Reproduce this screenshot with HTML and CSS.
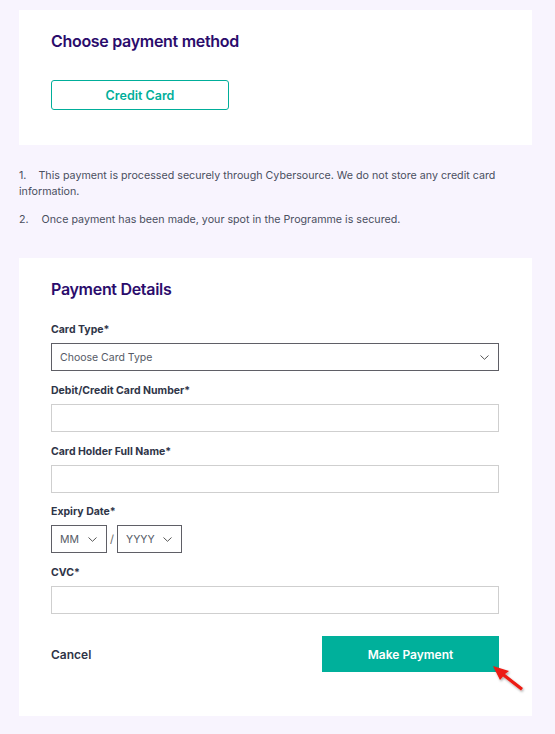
FILE: index.html
```html
<!doctype html>
<html>
    <head>
        <meta charset="utf-8">
        <link rel="stylesheet" href="styles.css">
    </head>
    <body>
        <div class="page">

            <div class="card methodCard">
                <h2 class="cardTitle">Choose payment method</h2>
                <button class="methodBtn">Credit Card</button>
            </div>

            <div class="notes">
                <p><span class="num">1.</span>This payment is processed securely through Cybersource. We do not store any credit card information.</p>
                <p><span class="num num2">2.</span>Once payment has been made, your spot in the Programme is secured.</p>
            </div>

            <div class="card detailsCard">
                <h2 class="cardTitle">Payment Details</h2>

                <div class="field">
                    <label class="lbl">Card Type*</label>
                    <div class="selWrap selFull">
                        <select class="sel">
                            <option>Choose Card Type</option>
                        </select>
                        <svg class="chev" width="9" height="5" viewBox="0 0 9 5"><path d="M0.5 0.5 L4.5 4.3 L8.5 0.5" fill="none" stroke="#555" stroke-width="1"/></svg>
                    </div>
                </div>

                <div class="field">
                    <label class="lbl">Debit/Credit Card Number*</label>
                    <input type="text" class="txt">
                </div>

                <div class="field">
                    <label class="lbl">Card Holder Full Name*</label>
                    <input type="text" class="txt">
                </div>

                <div class="field">
                    <label class="lbl">Expiry Date*</label>
                    <div class="expiry">
                        <div class="selWrap selMonth">
                            <select class="sel"><option>MM</option></select>
                            <svg class="chev" width="9" height="5" viewBox="0 0 9 5"><path d="M0.5 0.5 L4.5 4.3 L8.5 0.5" fill="none" stroke="#555" stroke-width="1"/></svg>
                        </div>
                        <span class="slash">/</span>
                        <div class="selWrap selYear">
                            <select class="sel"><option>YYYY</option></select>
                            <svg class="chev" width="9" height="5" viewBox="0 0 9 5"><path d="M0.5 0.5 L4.5 4.3 L8.5 0.5" fill="none" stroke="#555" stroke-width="1"/></svg>
                        </div>
                    </div>
                </div>

                <div class="field">
                    <label class="lbl">CVC*</label>
                    <input type="text" class="txt">
                </div>

                <div class="actions">
                    <a class="cancel">Cancel</a>
                    <button class="payBtn">Make Payment</button>
                </div>

                <svg class="pointer" width="40" height="34" viewBox="0 0 40 34">
                    <defs>
                        <filter id="sh" x="-20%" y="-20%" width="150%" height="150%">
                            <feDropShadow dx="1" dy="1.5" stdDeviation="1" flood-color="#000" flood-opacity="0.35"/>
                        </filter>
                    </defs>
                    <g filter="url(#sh)">
                        <path d="M5 5 L21 10 L17 13 L35 27 L33 29.5 L15 15.5 L12 19 Z" fill="#ec1c12"/>
                    </g>
                </svg>
            </div>

        </div>
    </body>
</html>
```

FILE: styles.css
```css
body
{
    margin: 0;
    background: #f8f4fe;
    font-family: Inter, "Noto Sans", sans-serif;
    color: #333a4c;
}
.page
{
    padding: 10px 23px 18px 19px;
}
.card
{
    background: #ffffff;
    padding: 21px 33px 35px 32px;
    position: relative;
}
.cardTitle
{
    margin: 0;
    font-size: 16px;
    line-height: 20px;
    font-weight: 600;
    color: #2b0c6c;
    letter-spacing: -0.3px;
}
.methodBtn
{
    display: block;
    margin-top: 29px;
    width: 178px;
    height: 30px;
    background: #fff;
    border: 1px solid #00ae9a;
    border-radius: 3px;
    color: #00ae9a;
    font-family: inherit;
    font-size: 12.5px;
    font-weight: 600;
    cursor: pointer;
}
.notes
{
    padding: 23px 0 30px 0;
    font-size: 10.7px;
    line-height: 16px;
    color: #4a4f5f;
}
.notes p
{
    margin: 0 0 12px 0;
}
.notes p:last-child
{
    margin-bottom: 0;
}
.num
{
    margin-right: 12px;
}
.num2
{
    margin-right: 13px;
}
.detailsCard
{
    padding-bottom: 44px;
}
.detailsCard .cardTitle
{
    margin-bottom: 24px;
}
.field
{
    margin-bottom: 12.75px;
}
.lbl
{
    display: block;
    font-size: 10.5px;
    line-height: 14px;
    font-weight: 700;
    color: #2f3548;
    margin-bottom: 6px;
}
.txt
{
    display: block;
    box-sizing: border-box;
    width: 100%;
    height: 28px;
    border: 1px solid #cfcfcf;
    border-radius: 0;
    padding: 0 8px;
    font-family: inherit;
}
.selWrap
{
    position: relative;
    box-sizing: border-box;
    height: 28px;
}
.sel
{
    -webkit-appearance: none;
    appearance: none;
    box-sizing: border-box;
    width: 100%;
    height: 28px;
    border: 1px solid #5f5f66;
    border-radius: 0;
    background: #fff;
    padding: 0 0 0 8px;
    font-family: inherit;
    font-size: 10.5px;
    color: #555a66;
    outline: none;
}
.chev
{
    position: absolute;
    right: 10px;
    top: 12px;
}
.expiry
{
    display: flex;
    align-items: center;
}
.selMonth
{
    width: 56px;
}
.selYear
{
    width: 65px;
}
.slash
{
    width: 10px;
    text-align: center;
    font-size: 11px;
    color: #666;
}
.actions
{
    display: flex;
    justify-content: space-between;
    align-items: center;
    margin-top: 22px;
}
.cancel
{
    font-size: 12px;
    font-weight: 600;
    color: #2f3548;
    cursor: pointer;
}
.payBtn
{
    width: 177px;
    height: 36px;
    border: none;
    background: #00b09b;
    color: #fff;
    font-family: inherit;
    font-size: 12px;
    font-weight: 600;
    cursor: pointer;
}
.pointer
{
    position: absolute;
    left: 469px;
    top: 403px;
}
```
